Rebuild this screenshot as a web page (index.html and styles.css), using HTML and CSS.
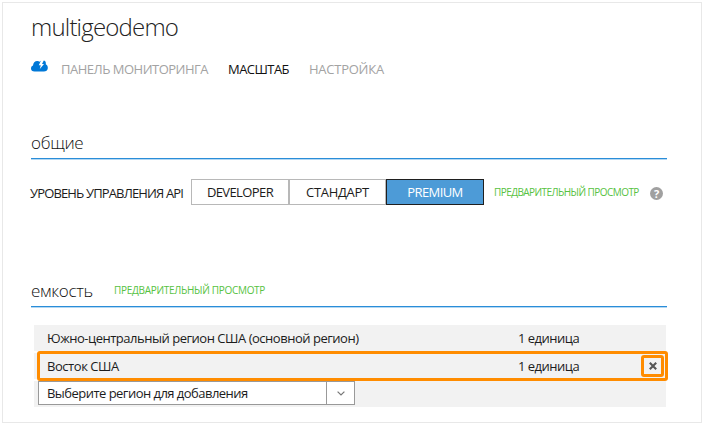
FILE: index.html
```html
<!DOCTYPE html>
<html lang="ru">
<head>
<meta charset="utf-8">
<title>multigeodemo</title>
<link rel="stylesheet" href="styles.css">
</head>
<body>
<main class="panel">
  <h1 class="title"><span>multigeodemo</span></h1>
  <nav class="tabs">
    <svg class="cloud" viewBox="0 0 17 12" width="17" height="12">
      <path d="M3.500 11.500C1.300 11.500 0 10.300 0 8.500c0-1.500.8-2.600 2-3C2.200 3 3.800 1 6.300 1c1 0 1.700.2 2.300.7C9.500.6 10.800 0 12.300.2c2 .3 2.900 2 2.500 4C16.200 4.900 17 6.300 16.800 8.200c-.3 2.100-1.700 3.300-3.900 3.300z" fill="#0078d7"/>
      <path d="M10.200 0 7.800 5.300h2L8.800 9l4.200-5h-2L13 0z" fill="#fff"/>
    </svg>
    <a class="tab tab-monitor">ПАНЕЛЬ МОНИТОРИНГА</a>
    <a class="tab tab-scale active">МАСШТАБ</a>
    <a class="tab tab-config">НАСТРОЙКА</a>
  </nav>

  <section class="general">
    <h2 class="heading"><span class="h-general">общие</span></h2>
    <div class="tier">
      <span class="tier-label">УРОВЕНЬ УПРАВЛЕНИЯ API</span>
      <div class="segments">
        <button class="segment"><span class="s-dev">DEVELOPER</span></button>
        <button class="segment"><span class="s-std">СТАНДАРТ</span></button>
        <button class="segment selected"><span class="s-prem">PREMIUM</span></button>
      </div>
      <span class="preview tier-preview">ПРЕДВАРИТЕЛЬНЫЙ ПРОСМОТР</span>
      <span class="help">?</span>
    </div>
  </section>

  <section class="capacity">
    <h2 class="heading"><span class="h-capacity">емкость</span><span class="preview capacity-preview">ПРЕДВАРИТЕЛЬНЫЙ ПРОСМОТР</span></h2>
    <div class="regions">
      <div class="row">
        <span class="region"><span class="r-south">Южно-центральный регион США (основной регион)</span></span>
        <span class="units">1 единица</span>
      </div>
      <div class="row">
        <span class="region"><span class="r-east">Восток США</span></span>
        <span class="units">1 единица</span>
        <div class="highlight">
          <button class="remove"><svg viewBox="0 0 8 8" width="8" height="8"><path d="M.8.8 7.200 7.200M7.200.8.8 7.200" stroke="#555" stroke-width="2.100"/></svg></button>
        </div>
      </div>
      <div class="row add">
        <div class="select">
          <span class="value">Выберите регион для добавления</span>
          <span class="arrow"><svg viewBox="0 0 8 5" width="8" height="5"><path d="M.6.6 4 4 7.400.6" fill="none" stroke="#777" stroke-width="1.200"/></svg></span>
        </div>
      </div>
    </div>
  </section>
</main>
</body>
</html>
```
FILE: styles.css
```css
* { box-sizing: border-box; }
body {
  margin: 0;
  padding: 2px 0 0 2px;
  background: #fff;
  color: #1c1c1c;
  font: 13px/18px "Open Sans", "Noto Sans", sans-serif;
}
.panel {
  width: 700px;
  height: 421px;
  border: 1px solid #e8e8e8;
  padding: 9px 34px 0 28px;
}
h1, h2 { margin: 0; font-weight: 300; }
button { margin: 0; padding: 0; font: inherit; color: inherit; background: none; border: 0; }
span, a { white-space: nowrap; }
.title { height: 28px; font-size: 24px; line-height: 29px; color: #222; letter-spacing: -0.8px; }
.tabs { display: flex; margin-top: 19px; height: 20px; line-height: 20px; color: #a3a3a3; }
.cloud { margin-top: 1px; flex: none; }
.tab-monitor { margin-left: 13px; width: 167px; letter-spacing: -0.5px; }
.tab-scale { width: 81px; letter-spacing: -0.55px; }
.tab-config { letter-spacing: -0.25px; }
.active { color: #111; }
.general { margin-top: 51px; }
.heading {
  display: flex;
  height: 29px;
  line-height: 25px;
  font-size: 17px;
  letter-spacing: -0.3px;
  color: #111;
  border-bottom: 1px solid #2a8dd8;
  box-shadow: 0 1px 0 #b4d8f3;
}
.tier { display: flex; align-items: center; margin: 20px 0 0 -1px; height: 26px; }
.tier-label { width: 161px; padding-top: 1px; letter-spacing: -0.85px; }
.segments { display: flex; flex: none; }
.segment { width: 98px; height: 26px; border: 1px solid #b8b8b8; line-height: 24px; letter-spacing: -0.6px; }
.segment + .segment { width: 97px; }
.s-std { letter-spacing: -0.3px; }
.segments .selected { width: 98px; background: #4d9bd7; border-color: #1f1f1f; color: #fff; }
.preview { color: #56c241; font-size: 10px; font-weight: 400; letter-spacing: -0.3px; }
.tier-preview { margin-left: 10px; width: 156px; letter-spacing: -0.56px; }
.help {
  width: 13px;
  height: 13px;
  margin-top: 3px;
  border-radius: 50%;
  background: #a0a0a0;
  color: #fff;
  font-size: 11px;
  font-weight: 700;
  line-height: 13px;
  text-align: center;
}
.capacity { margin-top: 73px; }
.h-capacity { width: 83px; }
.capacity-preview { line-height: 24px; letter-spacing: -0.3px; }
.regions { display: grid; gap: 2px; margin: 18px 0 0 3px; width: 632px; }
.row { position: relative; display: flex; height: 26px; line-height: 26px; padding-left: 13px; background: #f2f2f2; letter-spacing: -0.5px; }
.region { width: 471px; }
.r-south { letter-spacing: -0.48px; }
.r-east { letter-spacing: -0.45px; }
.highlight {
  position: absolute;
  left: 3px;
  top: -2px;
  width: 631px;
  height: 30px;
  border: 3px solid #ff8c00;
  border-radius: 3px;
}
.remove {
  position: absolute;
  right: 1px;
  top: 1px;
  display: grid;
  place-items: center;
  width: 23px;
  height: 22px;
  border: 3px solid #ff8c00;
  border-radius: 3px;
}
.add { padding-left: 4px; }
.select { display: flex; width: 317px; height: 24px; line-height: 22px; background: #fff; border: 1px solid #999; }
.value { width: 287px; padding-left: 8px; letter-spacing: -0.53px; }
.arrow { flex: 1; display: grid; place-items: center; border-left: 1px solid #999; }
```
